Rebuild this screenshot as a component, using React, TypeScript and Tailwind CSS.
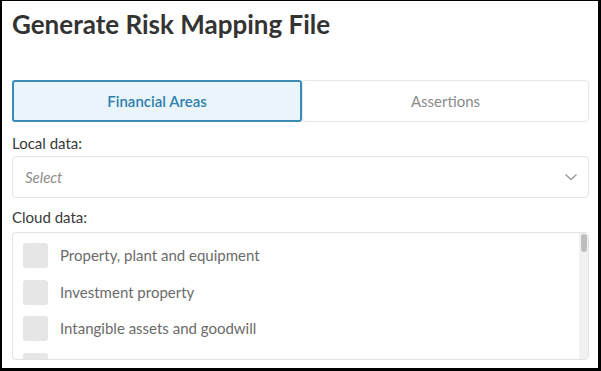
import React from "react"

const items = [
    "Property, plant and equipment",
    "Investment property",
    "Intangible assets and goodwill",
    "",
]

export default function App() {
    return (
        <div className="w-[601px] h-[371px] bg-white border-black border-l-2 border-r-[3px] border-t border-b-[3px] pl-[10px] pr-[9px] flex flex-col font-['Lato','Liberation_Sans',sans-serif] overflow-hidden">
            <h1 className="mt-[8px] text-[26px] leading-[30px] font-bold text-[#333333]">Generate Risk Mapping File</h1>

            <div className="mt-[41px] flex h-[42px]">
                <div className="w-[290px] border-2 border-[#3a8cb7] bg-[#eaf4fb] rounded-[3px] flex items-center justify-center text-[15px] font-semibold text-[#2f7fae]">
                    Financial Areas
                </div>
                <div className="flex-1 border border-[#e6e6e6] rounded-[4px] flex items-center justify-center text-[15px] text-[#8a8a8a]">
                    Assertions
                </div>
            </div>

            <label className="mt-[11px] text-[15px] leading-[20px] text-[#3a3a3a]">Local data:</label>
            <div className="mt-[3px] h-[42px] border border-[#e2e2e2] rounded-[4px] flex items-center justify-between pl-[12px] pr-[10px]">
                <span className="italic text-[15px] text-[#8c8c8c]">Select</span>
                <svg width="14" height="8" viewBox="0 0 14 8" fill="none">
                    <path d="M1.5 1.5 L7 6.5 L12.5 1.5" stroke="#9a9a9a" strokeWidth="1.4" />
                </svg>
            </div>

            <label className="mt-[9px] text-[15px] leading-[20px] text-[#3a3a3a]">Cloud data:</label>
            <div className="mt-[5px] h-[128px] border border-[#e2e2e2] rounded-[4px] flex overflow-hidden">
                <div className="flex-1 flex flex-col gap-[11.5px] pt-[10px] pl-[10px]">
                    {items.map((item, i) => (
                        <div key={i} className="flex items-center gap-[12px] h-[25px] shrink-0">
                            <div className="w-[25px] h-[25px] rounded-[3px] bg-[#e6e6e6] shrink-0" />
                            {item && <span className="text-[15px] text-[#6b6b6b]">{item}</span>}
                        </div>
                    ))}
                </div>
                <div className="w-[9px] bg-[#f1f1f1] flex flex-col pt-[1px] items-center">
                    <div className="w-[6px] h-[18px] rounded-[3px] bg-[#bdbdbd]" />
                </div>
            </div>
        </div>
    )
}
